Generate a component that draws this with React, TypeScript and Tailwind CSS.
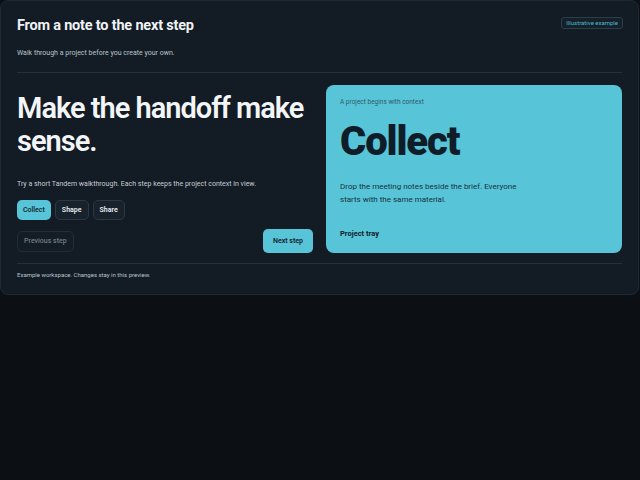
import React from "react";

export default function App() {
  const font = { fontFamily: "Roboto, 'Liberation Sans', sans-serif" };
  return (
    <div className="min-h-screen w-[640px] h-[480px] bg-[#0c0f13]" style={font}>
      <div className="w-[639px] rounded-[8px] border border-[#1e2934] bg-[#131b24] px-4 pt-[16px] pb-[15px]">
        <div className="flex items-start justify-between">
          <div>
            <h1 className="text-[14.5px] leading-[18px] font-bold tracking-[-0.2px] text-[#eef2f5]">From a note to the next step</h1>
            <p className="mt-[13px] text-[7px] leading-[10px] text-[#b9c4cc]">Walk through a project before you create your own.</p>
          </div>
          <span className="mr-[-1px] rounded-[3px] border border-[#27404a] bg-[#152029] px-[4px] py-[1px] text-[6px] leading-[8px] text-[#4fb8d0]">Illustrative example</span>
        </div>
        <div className="mt-[14px] border-t border-[#243039]" />
        <div className="mt-[12px] grid grid-cols-2 gap-[13px]">
          <div className="flex flex-col">
            <h2 className="mt-[7px] text-[29px] leading-[33px] font-semibold tracking-[-1px] text-[#f3f6f8]">Make the handoff make sense.</h2>
            <p className="mt-[21px] text-[7px] leading-[10px] text-[#c3ccd3]">Try a short Tandem walkthrough. Each step keeps the project context in view.</p>
            <div className="mt-[11px] flex gap-[4px]">
              <button className="h-[20px] rounded-[5px] bg-[#58c4d8] px-[6px] text-[7px] font-medium text-[#10202a]">Collect</button>
              <button className="h-[20px] rounded-[5px] border border-[#2c3842] bg-[#18222c] px-[6px] text-[7px] font-semibold text-[#e8edf0]">Shape</button>
              <button className="h-[20px] rounded-[5px] border border-[#2c3842] bg-[#18222c] px-[6px] text-[7px] font-semibold text-[#e8edf0]">Share</button>
            </div>
            <div className="mt-[9px] flex items-center justify-between">
              <button className="h-[21px] rounded-[5px] border border-[#222d36] bg-[#141d25] px-[6px] text-[7px] font-medium text-[#6f7c86]">Previous step</button>
              <button className="h-[24px] rounded-[5px] bg-[#58c4d8] px-[10px] text-[7px] font-semibold text-[#10202a]">Next step</button>
            </div>
          </div>
          <div className="rounded-[8px] bg-[#58c4d8] px-[14px] pt-[13px] pb-[14px] text-[#10202a]">
            <p className="text-[6.5px] leading-[9px] text-[#2f5a68]">A project begins with context</p>
            <p className="mt-[15px] text-[40px] leading-[40px] font-black tracking-[-1.1px] text-[#0f1d29]">Collect</p>
            <p className="mt-[18px] w-[190px] text-[8px] leading-[13px] text-[#163241]">Drop the meeting notes beside the brief. Everyone starts with the same material.</p>
            <p className="mt-[23px] text-[7.5px] leading-[10px] font-bold text-[#10202a]">Project tray</p>
          </div>
        </div>
        <div className="mt-[10px] border-t border-[#243039]" />
        <p className="mt-[6px] text-[6px] leading-[9px] text-[#b9c4cc]">Example workspace. Changes stay in this preview.</p>
      </div>
    </div>
  );
}
